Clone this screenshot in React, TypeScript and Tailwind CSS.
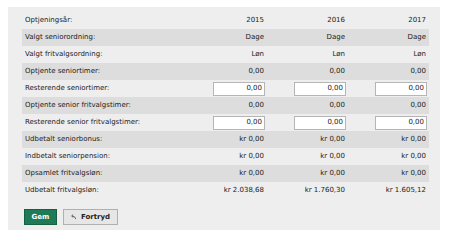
import React from "react";

type Row = { label: string; values: string[]; input?: boolean };

const rows: Row[] = [
  { label: "Optjeningsår:", values: ["2015", "2016", "2017"] },
  { label: "Valgt seniorordning:", values: ["Dage", "Dage", "Dage"] },
  { label: "Valgt fritvalgsordning:", values: ["Løn", "Løn", "Løn"] },
  { label: "Optjente seniortimer:", values: ["0,00", "0,00", "0,00"] },
  { label: "Resterende seniortimer:", values: ["0,00", "0,00", "0,00"], input: true },
  { label: "Optjente senior fritvalgstimer:", values: ["0,00", "0,00", "0,00"] },
  { label: "Resterende senior fritvalgstimer:", values: ["0,00", "0,00", "0,00"], input: true },
  { label: "Udbetalt seniorbonus:", values: ["kr 0,00", "kr 0,00", "kr 0,00"] },
  { label: "Indbetalt seniorpension:", values: ["kr 0,00", "kr 0,00", "kr 0,00"] },
  { label: "Opsamlet fritvalgsløn:", values: ["kr 0,00", "kr 0,00", "kr 0,00"] },
  { label: "Udbetalt fritvalgsløn:", values: ["kr 2.038,68", "kr 1.760,30", "kr 1.605,12"] },
];

export default function App() {
  return (
    <div
      className="w-[453px] h-[250px] bg-white pt-[7px] pl-[8px] text-[7px] text-[#222222]"
      style={{ fontFamily: '"DejaVu Sans", Verdana, sans-serif' }}
    >
      <div className="w-[432px] h-[223px] bg-[#eeeeee] pt-[5px] pl-[14px]">
        <div className="w-[407px] flex flex-col">
          {rows.map((r, i) => (
            <div
              key={i}
              className={
                "grid grid-cols-[164px_81px_81px_81px] h-[17px] items-center " +
                (i % 2 === 1 ? "bg-[#dddddd]" : "")
              }
            >
              <div className="pl-[3px]">{r.label}</div>
              {r.values.map((v, j) =>
                r.input ? (
                  <div key={j} className="flex justify-end pr-[2px]">
                    <div className="w-[52px] h-[14px] bg-white border border-[#b5b5b5] flex items-center justify-end pr-[2px]">
                      {v}
                    </div>
                  </div>
                ) : (
                  <div key={j} className="text-right pr-[3px]">
                    {v}
                  </div>
                )
              )}
            </div>
          ))}
        </div>
        <div className="flex gap-[6px] mt-[10px] ml-[2px]">
          <button className="w-[33px] h-[16px] bg-[#1f7a57] border border-[#15603f] text-white font-bold text-[7px] flex items-center justify-center">
            Gem
          </button>
          <button className="w-[55px] h-[16px] bg-[#e6e6e6] border border-[#b0b0b0] text-[#222222] font-bold text-[7px] flex items-center justify-center gap-[4px]">
            <svg width="6" height="6" viewBox="0 0 6 6">
              <path d="M1.2 2 Q4 2 4.8 5" fill="none" stroke="#444" strokeWidth="0.8" />
              <path d="M2.2 0.6 L0.6 2 L2.2 3.4" fill="none" stroke="#444" strokeWidth="0.8" />
            </svg>
            Fortryd
          </button>
        </div>
      </div>
    </div>
  );
}
